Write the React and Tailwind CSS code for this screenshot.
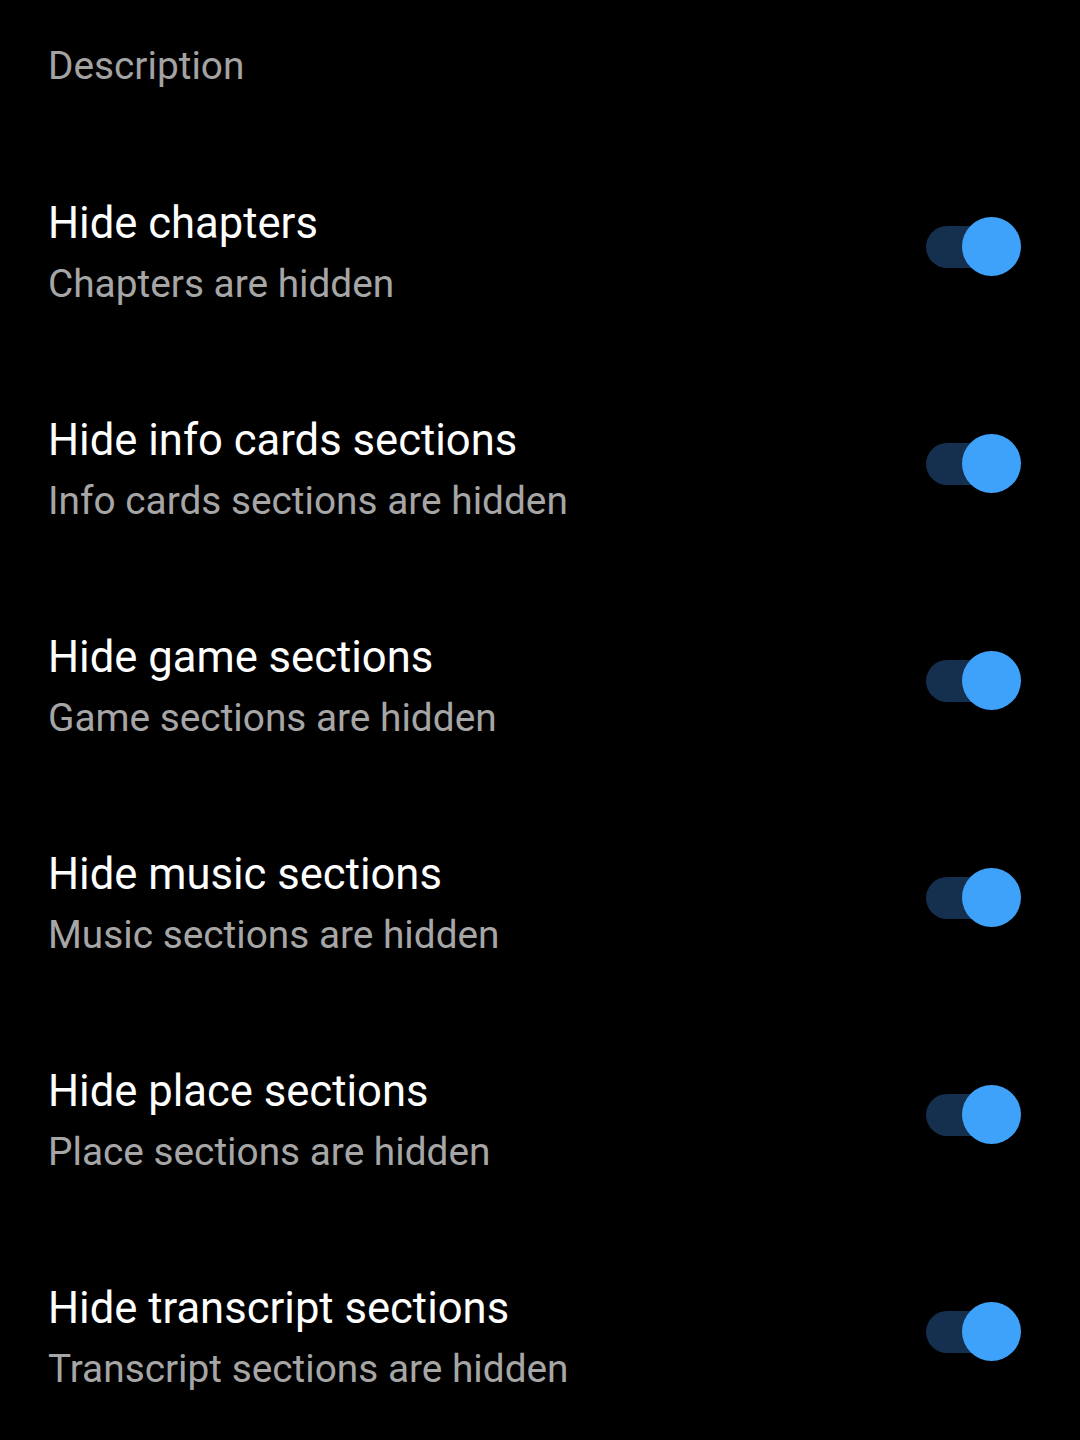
import React from "react";

const items = [
  { title: "Hide chapters", sub: "Chapters are hidden" },
  { title: "Hide info cards sections", sub: "Info cards sections are hidden" },
  { title: "Hide game sections", sub: "Game sections are hidden" },
  { title: "Hide music sections", sub: "Music sections are hidden" },
  { title: "Hide place sections", sub: "Place sections are hidden" },
  { title: "Hide transcript sections", sub: "Transcript sections are hidden" },
];

const Toggle = () => (
  <div className="relative w-[95px] h-[59px] mb-[10px] shrink-0 flex items-center">
    <div className="w-[84px] h-[42px] rounded-full bg-[#14304e]" />
    <div className="absolute left-[36px] top-0 w-[59px] h-[59px] rounded-full bg-[#3ea1fa]" />
  </div>
);

export default function App() {
  return (
    <div className="min-h-[1440px] bg-black font-['Roboto',sans-serif] pl-[48px] pr-[59px]">
      <div className="h-[143px] pt-[42px]">
        <p className="text-[38.8px] leading-[48px] text-[#a3a3a3]">Description</p>
      </div>
      {items.map((it) => (
        <div key={it.title} className="h-[217px] flex items-center justify-between">
          <div className="flex flex-col pt-[4px]">
            <p className="text-[43.6px] leading-[60px] text-white">{it.title}</p>
            <p className="text-[38.8px] leading-[60px] text-[#a6a6a6]">{it.sub}</p>
          </div>
          <Toggle />
        </div>
      ))}
    </div>
  );
}
